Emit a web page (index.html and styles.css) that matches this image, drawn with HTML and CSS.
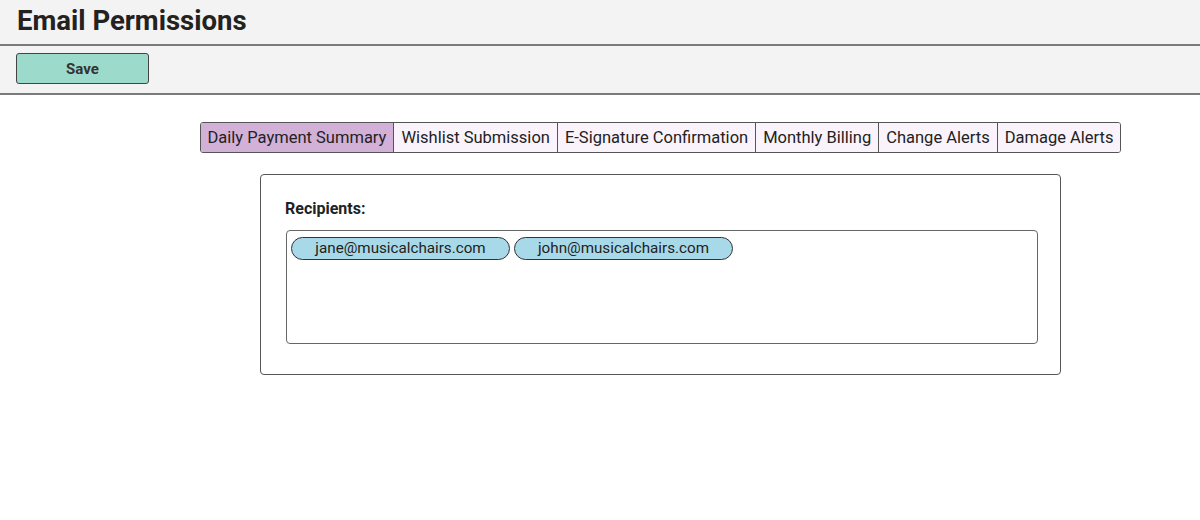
FILE: index.html
```html
<!DOCTYPE html>
<html>
<head>
<meta charset="utf-8">
<link rel="stylesheet" href="styles.css">
</head>
<body>
<header class="title-bar">
  <h1 class="title">Email Permissions</h1>
</header>
<div class="toolbar">
  <button class="save-btn">Save</button>
</div>
<main class="content">
  <nav class="tabs">
    <div class="tab active">Daily Payment Summary</div>
    <div class="tab">Wishlist Submission</div>
    <div class="tab">E-Signature Confirmation</div>
    <div class="tab">Monthly Billing</div>
    <div class="tab">Change Alerts</div>
    <div class="tab">Damage Alerts</div>
  </nav>
  <section class="card">
    <div class="label">Recipients:</div>
    <div class="recipients">
      <span class="chip">jane@musicalchairs.com</span>
      <span class="chip">john@musicalchairs.com</span>
    </div>
  </section>
</main>
</body>
</html>
```

FILE: styles.css
```css
* { box-sizing: border-box; }
html, body { margin: 0; padding: 0; }
body {
  font-family: Roboto, "Liberation Sans", sans-serif;
  color: #222;
  background: #fff;
  width: 1200px;
  height: 520px;
}
.title-bar {
  background: #f3f3f3;
  height: 46px;
  border-bottom: 2px solid #7a7a7a;
  padding: 5px 0 0 17px;
}
.title {
  margin: 0;
  font-size: 27.5px;
  font-weight: 700;
  line-height: 32px;
  color: #222;
}
.toolbar {
  background: #f3f3f3;
  height: 49px;
  border-bottom: 2px solid #7a7a7a;
  padding: 7px 0 0 16px;
}
.save-btn {
  width: 133px;
  height: 31px;
  background: #9cdacb;
  border: 1px solid #444;
  border-radius: 3px;
  font-family: Roboto, "Liberation Sans", sans-serif;
  font-weight: 700;
  font-size: 15px;
  color: #333;
  padding: 0;
}
.content {
  padding: 27px 0 0 121px;
  display: flex;
  flex-direction: column;
  align-items: center;
}
.tabs {
  display: flex;
  border: 1px solid #555;
  border-radius: 3px;
  overflow: hidden;
  height: 31px;
}
.tab {
  background: #faf3fb;
  font-size: 16.5px;
  line-height: 29px;
  padding: 0 7px;
  color: #222;
  border-left: 1px solid #555;
}
.tab:first-child { border-left: none; }
.tab.active { background: #d3b0d8; }
.card {
  margin-top: 21px;
  width: 801px;
  height: 201px;
  border: 1px solid #555;
  border-radius: 4px;
  padding: 24px 22px 0 25px;
}
.label {
  font-weight: 700;
  font-size: 16px;
  line-height: 19px;
  color: #222;
  margin-left: -1px;
}
.recipients {
  margin-top: 12px;
  height: 114px;
  border: 1px solid #666;
  border-radius: 4px;
  padding: 6px 4px;
  display: flex;
  align-items: flex-start;
  gap: 4px;
}
.chip {
  width: 219px;
  height: 23px;
  background: #a8d9e9;
  border: 1px solid #333;
  border-radius: 12px;
  font-size: 15.2px;
  line-height: 21px;
  text-align: center;
  color: #222;
}
```
